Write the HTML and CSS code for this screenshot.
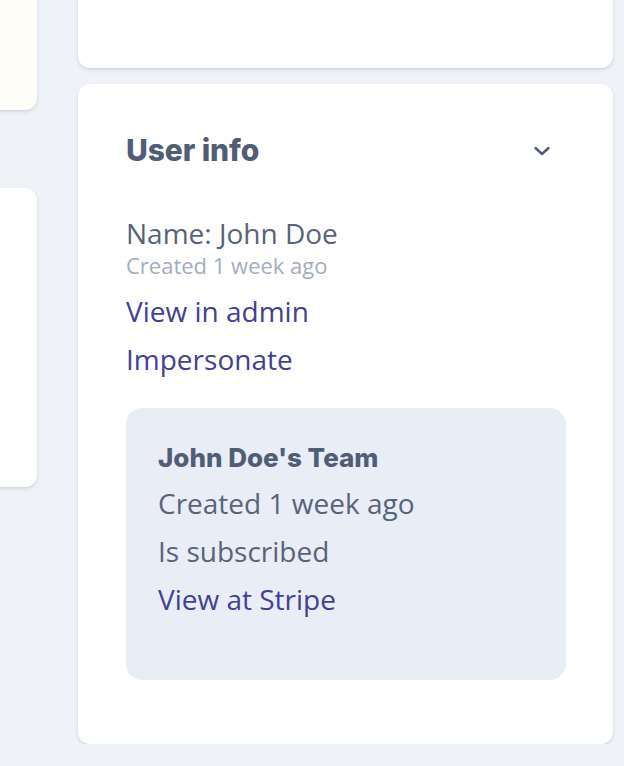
FILE: index.html
```html
<!DOCTYPE html>
<html>
<head>
<meta charset="utf-8">
<link rel="stylesheet" href="styles.css">
</head>
<body>
<div class="layout">
  <div class="col col-left">
    <div class="card card-cream card-top-left"></div>
    <div class="card card-left-2"></div>
  </div>
  <div class="col col-right">
    <div class="card card-top-right"></div>
    <div class="card card-main">
      <div class="header">
        <h2 class="title">User info</h2>
        <svg class="chevron" width="24" height="24" viewBox="0 0 24 24"><polyline points="5.5,9 12,15 18.5,9" fill="none" stroke="#515d75" stroke-width="2.4" stroke-linecap="round" stroke-linejoin="round"/></svg>
      </div>
      <div class="name">Name: John Doe</div>
      <div class="meta">Created 1 week ago</div>
      <a class="link first" href="#">View in admin</a>
      <a class="link" href="#">Impersonate</a>
      <div class="team">
        <div class="team-title">John Doe's Team</div>
        <div class="team-line">Created 1 week ago</div>
        <div class="team-line">Is subscribed</div>
        <a class="link team-link" href="#">View at Stripe</a>
      </div>
    </div>
  </div>
</div>
</body>
</html>
```
FILE: styles.css
```css
html, body {
  margin: 0;
  padding: 0;
  background: #eff2f7;
  font-family: "Open Sans", "Noto Sans", sans-serif;
  color: #586479;
  overflow: hidden;
}
.layout {
  display: grid;
  grid-template-columns: 300px 535px;
  column-gap: 41px;
  margin-left: -263px;
  margin-top: -200px;
  align-items: start;
}
.col {
  display: flex;
  flex-direction: column;
}
.col-left { row-gap: 78px; }
.col-right { row-gap: 16px; }
.card {
  background: #ffffff;
  border-radius: 12px;
  box-shadow: 0 2px 4px rgba(40, 50, 80, 0.10), 0 1px 2px rgba(40, 50, 80, 0.06);
}
.card-cream { background: #fffdf8; }
.card-top-left { height: 310px; }
.card-left-2 { height: 299px; }
.card-top-right { height: 268px; }
.card-main {
  display: flex;
  flex-direction: column;
  align-items: flex-start;
  padding: 48px 47px 64px 48px;
  height: 660px;
  box-sizing: border-box;
}
.header {
  align-self: stretch;
  display: flex;
  justify-content: space-between;
  align-items: center;
  height: 36px;
}
.title {
  margin: 0;
  font-family: Inter, "Liberation Sans", sans-serif;
  font-weight: 800;
  font-size: 30px;
  line-height: 36px;
  color: #515d75;
  letter-spacing: -0.1px;
}
.chevron {
  margin-right: 12px;
  margin-top: 2px;
}
.name {
  margin-top: 47px;
  font-size: 28px;
  line-height: 36px;
}
.meta {
  font-size: 22px;
  line-height: 28px;
  color: #a3adbd;
}
.link {
  display: block;
  font-size: 28px;
  line-height: 48px;
  color: #434190;
  text-decoration: none;
}
.link.first { margin-top: 8px; }
.team {
  align-self: stretch;
  margin-top: 25px;
  background: #e9edf6;
  border-radius: 16px;
  padding: 34px 32px 0 32px;
  flex: 1;
}
.team-title {
  font-family: Inter, "Liberation Sans", sans-serif;
  font-weight: 800;
  font-size: 26px;
  line-height: 32px;
  color: #515d75;
  margin-bottom: 5px;
}
.team-line {
  font-size: 28px;
  line-height: 48px;
}
```
